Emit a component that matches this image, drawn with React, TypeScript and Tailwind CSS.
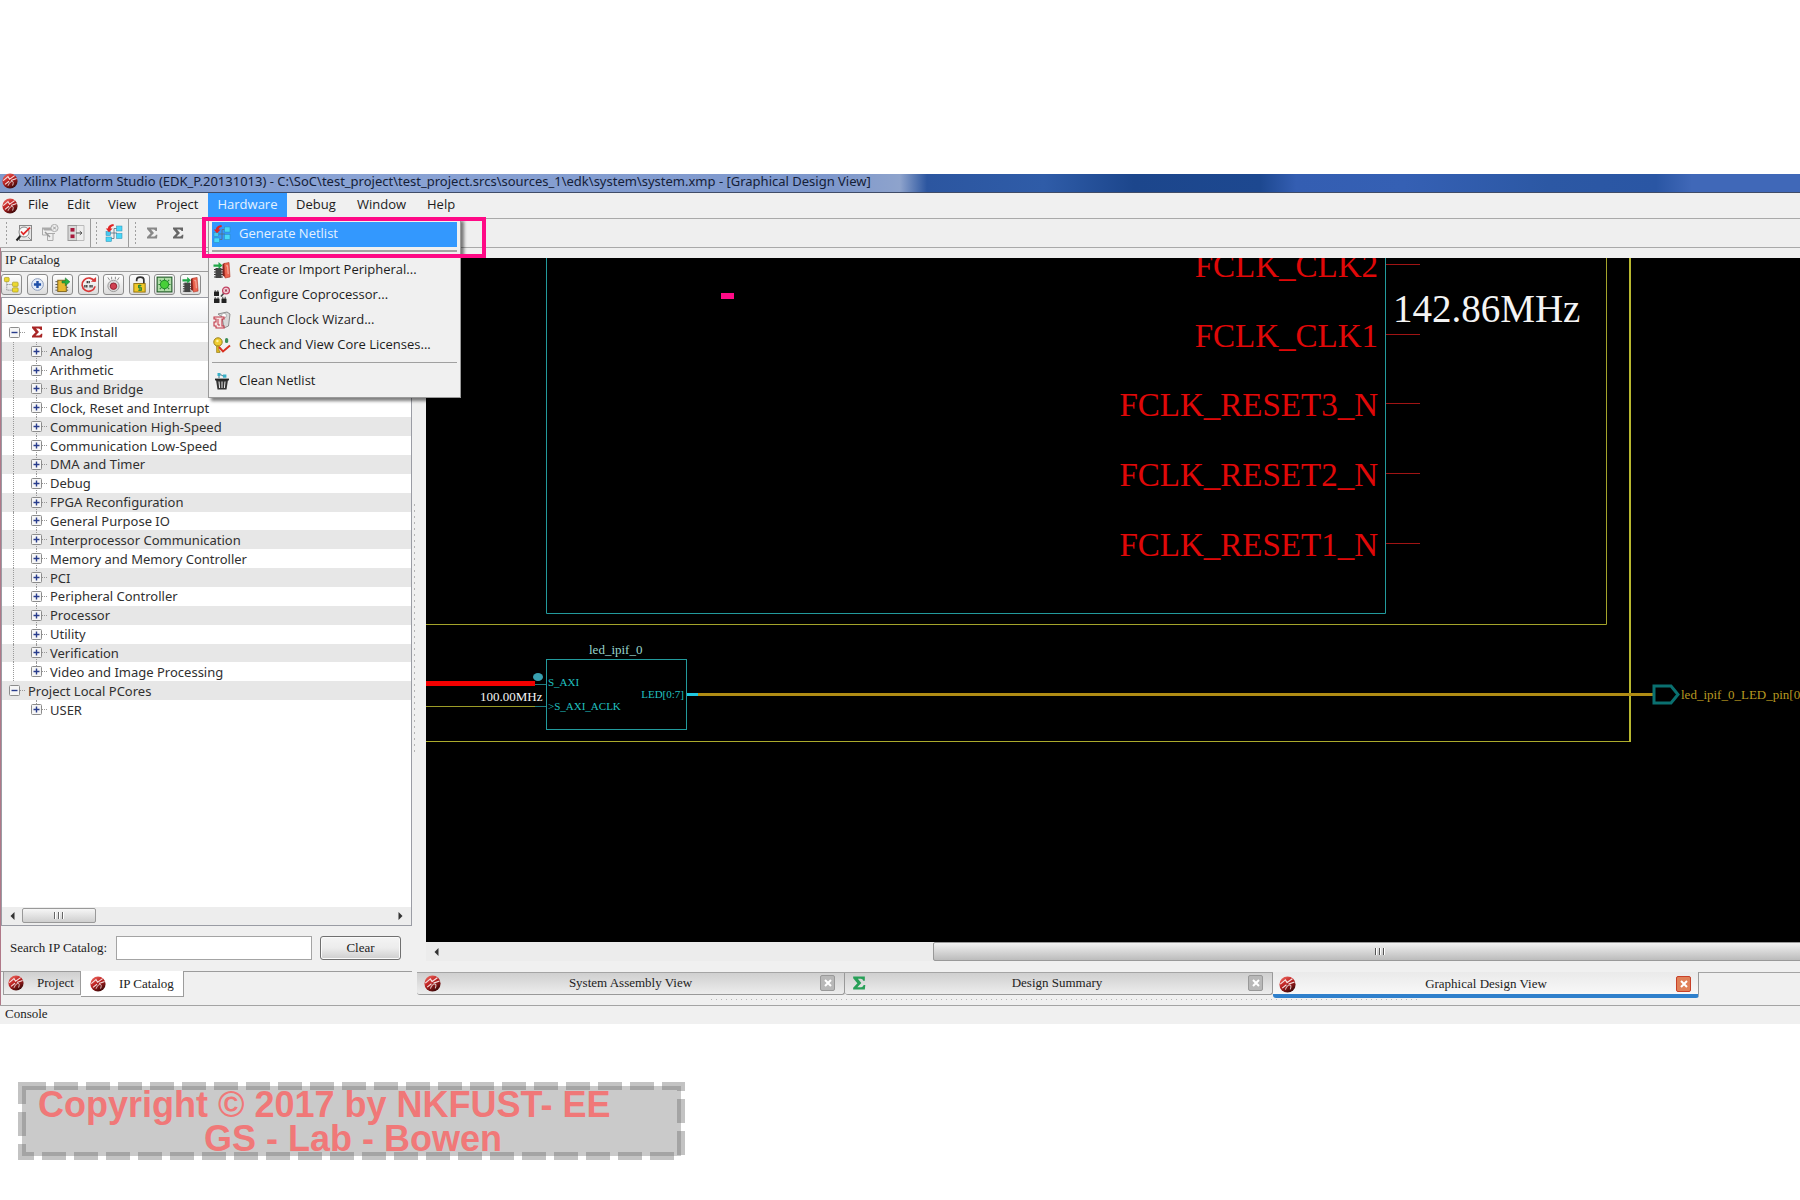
import React from "react";

const sans = "font-['Open_Sans','Noto_Sans',sans-serif]";
const wideSans = "font-['Noto_Sans','Open_Sans',sans-serif]";
const serif = "font-['Liberation_Serif',serif]";

function Logo({ className = "size-4" }: { className?: string }) {
  return (
    <svg viewBox="0 0 16 16" className={`${className} shrink-0`} aria-hidden="true">
      <defs>
        <linearGradient id="ball" x1="0" y1="0" x2="0.6" y2="1">
          <stop offset="0" stopColor="#f4746a" />
          <stop offset="0.5" stopColor="#c02424" />
          <stop offset="1" stopColor="#400808" />
        </linearGradient>
      </defs>
      <circle cx="8" cy="8" r="7.6" fill="url(#ball)" />
      <path d="M1.2 7.6 6 3.6 7.6 6.2 12.6 2.6M3 11.4 7 8.2M9 7.6 14.6 5.6" fill="none" stroke="#f6e0e0" strokeWidth="1.1" />
      <path d="M6 12.8Q7.4 8.6 9.8 8.4T10.6 12.6" fill="none" stroke="#dcc4c4" strokeWidth="1" />
    </svg>
  );
}

function Sigma({ color, className = "size-3" }: { color: string; className?: string }) {
  return (
    <svg viewBox="0 0 12 12" className={`${className} shrink-0`} aria-hidden="true">
      <path d="M1 0.5H11V4H9.6Q9.2 2.4 7.6 2.4H5L8 6 4.6 9.6H8Q9.6 9.6 10 7.8H11.4L11 11.5H1V10L4.6 6.2 1 2Z" fill={color} />
    </svg>
  );
}

type IconProps = { children: React.ReactNode; className?: string };
function Icon({ children, className = "size-[18px]" }: IconProps) {
  return (
    <svg viewBox="0 0 18 18" className={`${className} shrink-0`} aria-hidden="true">
      {children}
    </svg>
  );
}

const NetlistGlyph = () => (
  <>
    <path d="M9 4.5V14.5M5 9H12M9 4.5H12M6 14.5H9" stroke="#5c6c7c" strokeWidth=".8" fill="none" />
    <rect x="1" y="7.5" width="4.5" height="4" fill="#48c8f0" stroke="#2a8ab0" strokeWidth=".5" />
    <rect x="1" y="13" width="5.5" height="4.5" fill="#48d8f8" stroke="#2a8ab0" strokeWidth=".5" />
    <rect x="11.5" y="2" width="5.5" height="5" fill="#48d8f8" stroke="#2a8ab0" strokeWidth=".5" />
    <rect x="11.5" y="9.5" width="5.5" height="5" fill="#48d8f8" stroke="#2a8ab0" strokeWidth=".5" />
    <path d="M8.5 0 8.8 2Q6 2 5.6 4.6H7.6L4 8.2 0.8 4.6H2.8Q3.2 0.6 8.5 0Z" fill="#e02424" />
  </>
);

const PeripheralGlyph = () => (
  <>
    <path d="M1 8.5H10M1 11H10M1 13.5H10M1 16H10" stroke="#333" />
    <rect x="2.5" y="7" width="6" height="10" fill="#444" />
    <path d="M0.5 3.5H5.5V1L9.5 4.5 5.5 8V5.8H0.5Z" fill="#20a848" />
    <path d="M9.5 3 12 2V16L9.5 14.5Z" fill="#7c2420" />
    <path d="M11 2.5 16 1.5 17 16 12 17Z" fill="#ec6450" stroke="#b03020" strokeWidth=".6" />
    <path d="M13 5 14.6 4.6 15.2 13" stroke="#f8b8a8" fill="none" />
  </>
);

const CoprocessorGlyph = () => (
  <>
    <rect x="1" y="5.5" width="5" height="4.5" rx=".6" fill="#222" />
    <rect x="1" y="12.5" width="5.5" height="4.5" rx=".6" fill="#222" />
    <rect x="8.5" y="12.5" width="5" height="4.5" rx=".6" fill="#222" />
    <path d="M2.2 4.2V6M4.8 4.2V6M2.2 11.2V13M5 11.2V13M9.8 10.8V13M12.2 10.8V13" stroke="#444" />
    <path d="M8 10.5 11 7" stroke="#444" strokeWidth="1.6" />
    <circle cx="13" cy="4.5" r="3.4" fill="#f4d0d8" stroke="#c04060" strokeWidth="1.3" />
    <path d="M11.8 3.4 14.2 5.6M14.2 3.4 11.8 5.6" stroke="#902840" />
  </>
);

const ClockGlyph = () => (
  <>
    <path d="M5 3 14 1 17 3 15.5 15 11 17 9 6Z" fill="#d8d8d8" stroke="#777" strokeWidth=".8" />
    <circle cx="11" cy="4.6" r="2.4" fill="#fff" stroke="#999" strokeWidth=".7" />
    <path d="M1 6H11V8H9V15H11V17H3V15H1V11H3V8H1Z" fill="#f6e4e4" stroke="#c03848" strokeWidth="1.1" />
    <path d="M5 8V14H7" stroke="#c03848" fill="none" />
  </>
);

const LicenseGlyph = () => (
  <>
    <circle cx="5" cy="6" r="4.2" fill="#f0cc30" stroke="#98801c" />
    <circle cx="4.4" cy="5" r="1.2" fill="#fff4a0" />
    <path d="M3.6 10V16.5H7V15H6V10Z" fill="#e0b820" stroke="#98801c" strokeWidth=".7" />
    <path d="M6 11 10 15.5 17 9.5" fill="none" stroke="#d83020" strokeWidth="1.9" />
    <rect x="12" y="2" width="3.2" height="5" rx="1.5" fill="#3c8c58" />
  </>
);

const TrashGlyph = () => (
  <>
    <path d="M3 8H15L13.5 17.5H4.5Z" fill="#333" />
    <path d="M6 9.5 6.6 16M9 9.5V16M12 9.5 11.4 16" stroke="#eee" />
    <path d="M2 7.5H16" stroke="#222" strokeWidth="1.8" />
    <rect x="4.5" y="1" width="3" height="3" fill="#38b0c8" />
    <rect x="10" y="2.5" width="3.4" height="3.2" fill="#38b0c8" />
    <path d="M7.5 2.5 10 4M6 4V6" stroke="#38788c" />
  </>
);

const CheckDocGlyph = () => (
  <>
    <rect x="4.5" y="1.5" width="12" height="15" fill="#e6e6e6" stroke="#888" />
    <path d="M13 13 16 16" stroke="#999" />
    <circle cx="9" cy="8" r="5" fill="#fafafa" stroke="#888" />
    <path d="M5.4 12 1.5 16.5" stroke="#222" strokeWidth="2" />
    <path d="M6 7.5 8.4 10.2 15 3.6" fill="none" stroke="#e02828" strokeWidth="1.7" />
  </>
);

const WindowXGlyph = () => (
  <>
    <rect x="1" y="3.5" width="11" height="3" fill="#aaa" />
    <path d="M1.5 4V11H6M12 9V16.5H6.5V9.5H14" fill="#eee" stroke="#aaa" />
    <path d="M4 8 9 13" stroke="#999" strokeWidth="1.5" />
    <circle cx="13.5" cy="4" r="3.6" fill="#eee" stroke="#aaa" />
    <path d="M12 2.5 15 5.5M15 2.5 12 5.5" stroke="#999" />
  </>
);

const PortsGlyph = () => (
  <>
    <rect x="1" y="1.5" width="9" height="15" fill="#d8d8d8" stroke="#999" />
    <path d="M10 1.5H17V16.5H10" fill="#eee" stroke="#bbb" />
    <rect x="3.5" y="4" width="4" height="3.6" fill="#a8183c" />
    <rect x="3.5" y="10.5" width="4" height="3.6" fill="#a8183c" />
    <path d="M9 9H15M12.8 7.2 15 9 12.8 10.8" fill="none" stroke="#555" />
  </>
);

const catalogTools: { label: string; glyph: React.ReactNode }[] = [
  {
    label: "Tree view",
    glyph: (
      <>
        <path d="M4 4V15H10M4 9H10" fill="none" stroke="#777" strokeDasharray="1 1" />
        <rect x="1.5" y="1.5" width="5" height="4.5" rx="1" fill="#ecd830" stroke="#a89818" strokeWidth=".7" />
        <rect x="10" y="6.5" width="6" height="4.5" rx="1" fill="#ecd830" stroke="#a89818" strokeWidth=".7" />
        <rect x="10" y="12.5" width="6" height="4.5" rx="1" fill="#ecd830" stroke="#a89818" strokeWidth=".7" />
      </>
    ),
  },
  {
    label: "Expand all",
    glyph: (
      <>
        <circle cx="9" cy="9" r="6.2" fill="#e4ecf8" stroke="#8898b8" />
        <path d="M9 5.2V12.8M5.2 9H12.8" stroke="#2050a8" strokeWidth="2.6" />
      </>
    ),
  },
  {
    label: "Add core",
    glyph: (
      <>
        <path d="M1.5 6H6M1.5 9H6M1.5 12H6M1.5 15H6M13 12H15M13 15H15" stroke="#555" />
        <rect x="4" y="4.5" width="9" height="12" fill="#e8b830" stroke="#80641c" />
        <path d="M8.5 5.2H12V2L16.8 6.2 12 10.4V7.4H8.5Z" fill="#28b040" stroke="#187028" strokeWidth=".6" />
      </>
    ),
  },
  {
    label: "Refresh catalog",
    glyph: (
      <>
        <path d="M15.5 6A7 7 0 1 0 16 11" fill="none" stroke="#d83838" strokeWidth="1.8" />
        <path d="M11.5 6.2H17V1Z" fill="#d83838" />
        <path d="M7 6.5H11M4.5 10.8H8M10 10.8H13.5" stroke="#333" strokeWidth="2.6" strokeDasharray="1.4 .6" />
      </>
    ),
  },
  {
    label: "Locate core",
    glyph: (
      <>
        <path d="M3 1.5 5 4.5M7 0.8V3.6M11 0.8V3.6M15 1.5 13 4.5" stroke="#888" />
        <circle cx="9" cy="10.5" r="6" fill="#d8d8d8" stroke="#999" />
        <circle cx="9" cy="10.8" r="3.4" fill="#d04050" stroke="#902030" />
      </>
    ),
  },
  {
    label: "License",
    glyph: (
      <>
        <path d="M6 5.5V4A3.8 2.8 0 0 1 13.6 4V9" fill="none" stroke="#333" strokeWidth="1.8" />
        <rect x="3" y="8" width="12" height="9" fill="#f0c828" stroke="#907010" />
        <path d="M11 10H8V12.4H11V15H7.6M9.4 9V16" fill="none" stroke="#288838" strokeWidth="1.1" />
      </>
    ),
  },
  {
    label: "Show chip",
    glyph: (
      <>
        <rect x="1.2" y="1.2" width="15.6" height="15.6" fill="#b0dca8" stroke="#225c28" strokeWidth="1.2" />
        <path d="M4 4 14 14M14 4 4 14M9 2.6V15.4M2.6 9H15.4" stroke="#2c8c30" strokeWidth="1.2" />
        <circle cx="9" cy="9" r="4.4" fill="#48d038" stroke="#208828" />
      </>
    ),
  },
  { label: "Import peripheral", glyph: <PeripheralGlyph /> },
];

const menuEntries: { label: string; icon: React.ReactNode }[] = [
  { label: "Create or Import Peripheral...", icon: <PeripheralGlyph /> },
  { label: "Configure Coprocessor...", icon: <CoprocessorGlyph /> },
  { label: "Launch Clock Wizard...", icon: <ClockGlyph /> },
  { label: "Check and View Core Licenses...", icon: <LicenseGlyph /> },
];

function HardwareMenu() {
  return (
    <div role="menu" className="absolute left-0 top-full z-20 w-[253px] border border-[#9a9a9a] bg-[#f0f0f0] px-[3px] pb-1 pt-[3px] text-[13px] text-[#1c1c1c] shadow-[3px_3px_3px_rgba(0,0,0,0.5)]">
      <button role="menuitem" className="flex h-[25px] w-full items-center gap-2 bg-[#3398fe] pb-px pl-px text-left text-[#e4f1ff]">
        <Icon><NetlistGlyph /></Icon>
        Generate Netlist
      </button>
      <div className="mb-[5px] mt-[3px] border-t-2 border-[#a4a4a4]" />
      {menuEntries.map((m) => (
        <button key={m.label} role="menuitem" className="flex h-[25px] w-full items-center gap-2 whitespace-nowrap pl-px text-left">
          <Icon>{m.icon}</Icon>
          {m.label}
        </button>
      ))}
      <div className="my-[5px] border-t border-[#a0a0a0]" />
      <button role="menuitem" className="flex h-[25px] w-full items-center gap-2 pl-px text-left">
        <Icon><TrashGlyph /></Icon>
        Clean Netlist
      </button>
    </div>
  );
}

function MenuBar() {
  const item = "flex h-full items-center pb-[2px]";
  return (
    <nav className={`${sans} relative z-10 flex h-[26px] items-center border-b border-[#a9a9a9] bg-[#f0f0f0] pl-[2px] text-[13px] text-[#1c1c1c]`}>
      <Logo />
      <button className={`${item} w-[39px] pl-[10px]`}>File</button>
      <button className={`${item} w-[41px] pl-[10px]`}>Edit</button>
      <button className={`${item} w-12 pl-[10px]`}>View</button>
      <button className={`${item} w-[62px] pl-[10px]`}>Project</button>
      <div className="relative h-full">
        <button aria-expanded="true" className={`${item} w-[79px] justify-center bg-[#3398fe] text-[#e4f1ff]`}>Hardware</button>
        <HardwareMenu />
        <div className="pointer-events-none absolute -left-[6px] top-6 z-30 h-[41px] w-[284px] border-4 border-[#ff0a86]" />
      </div>
      <button className={`${item} w-[61px] pl-[9px]`}>Debug</button>
      <button className={`${item} w-[70px] pl-[9px]`}>Window</button>
      <button className={`${item} pl-[9px]`}>Help</button>
    </nav>
  );
}

function Grip() {
  return <div className="h-6 w-[3px] bg-[radial-gradient(circle,#a0a0a0_1px,transparent_1px)] bg-[length:3px_4px]" />;
}

function Toolbar() {
  return (
    <div className="flex h-[29px] items-center border-b border-[#a9a9a9] bg-[#efefef] pl-[5px]">
      <Grip />
      <div className="flex h-full items-center gap-2 border-r border-[#9c9c9c] pl-[7px] pr-[5px]">
        <button aria-label="Check design"><Icon><CheckDocGlyph /></Icon></button>
        <button aria-label="Close window"><Icon><WindowXGlyph /></Icon></button>
        <button aria-label="Ports"><Icon><PortsGlyph /></Icon></button>
      </div>
      <div className="flex h-full items-center gap-[7px] border-r border-[#9c9c9c] pl-1 pr-[5px]">
        <Grip />
        <button aria-label="Generate netlist"><Icon><NetlistGlyph /></Icon></button>
      </div>
      <div className="flex h-full items-center pl-[5px]">
        <Grip />
        <button aria-label="Summary" className="ml-[9px]"><Sigma color="#888" /></button>
        <button aria-label="Report" className="ml-[14px]"><Sigma color="#666" /></button>
      </div>
    </div>
  );
}

const groups = [
  "Analog", "Arithmetic", "Bus and Bridge", "Clock, Reset and Interrupt", "Communication High-Speed",
  "Communication Low-Speed", "DMA and Timer", "Debug", "FPGA Reconfiguration", "General Purpose IO",
  "Interprocessor Communication", "Memory and Memory Controller", "PCI", "Peripheral Controller",
  "Processor", "Utility", "Verification", "Video and Image Processing",
];

function Toggle({ open }: { open?: boolean }) {
  return (
    <button aria-label={open ? "Collapse" : "Expand"} className="relative z-10 size-[11px] shrink-0">
      <svg viewBox="0 0 11 11" className="size-[11px]">
        <rect x=".5" y=".5" width="10" height="10" rx="1" fill="#f6f6f6" stroke="#8c8c8c" />
        <path d={open ? "M2.5 5.5H8.5" : "M2.5 5.5H8.5M5.5 2.5V8.5"} stroke="#283c8c" strokeWidth="1.4" />
      </svg>
    </button>
  );
}

function Leaf({ label, last }: { label: string; last?: boolean }) {
  return (
    <div className="relative flex items-center pl-[29px] even:bg-[#e7e7e7]">
      {label !== "USER" && <span className="absolute inset-y-0 left-[11px] border-l border-dotted border-[#999]" />}
      <span className={`absolute left-[34px] top-0 border-l border-dotted border-[#999] ${last ? "bottom-1/2" : "bottom-0"}`} />
      <Toggle />
      <span className="w-[5px] border-t border-dotted border-[#999]" />
      <span className="pl-[3px]">{label}</span>
    </div>
  );
}

function Tree() {
  return (
    <div className={`${wideSans} grid h-[396px] auto-rows-fr text-[13px] leading-[18px] text-[#303030]`}>
      <div className="flex items-center pl-[7px]">
        <Toggle open />
        <span className="w-[5px] border-t border-dotted border-[#999]" />
        <span className="pl-[6px]"><Sigma color="#a82424" /></span>
        <span className="pl-[9px]">EDK Install</span>
      </div>
      {groups.map((g) => (
        <Leaf key={g} label={g} last={g === "Video and Image Processing"} />
      ))}
      <div className="flex items-center pl-[7px] even:bg-[#e7e7e7]">
        <Toggle open />
        <span className="w-[5px] border-t border-dotted border-[#999]" />
        <span className="pl-[3px]">Project Local PCores</span>
      </div>
      <Leaf label="USER" last />
    </div>
  );
}

function Arrow({ right }: { right?: boolean }) {
  return (
    <svg viewBox="0 0 5 8" className="h-2 w-[5px]" aria-hidden="true">
      <path d={right ? "M0.5 0 4.5 4 0.5 8Z" : "M4.5 0 0.5 4 4.5 8Z"} fill="#333" />
    </svg>
  );
}

function Sidebar() {
  return (
    <aside className="flex w-[411px] shrink-0 flex-col pt-[3px]">
      <h2 className={`${serif} flex h-[21px] items-center border border-r-0 border-[#9c9c9c] pb-[3px] pl-[3px] text-[13px] text-[#222]`}>IP Catalog</h2>
      <div className="flex h-[25px] w-[200px] items-center justify-between">
        {catalogTools.map((t) => (
          <button key={t.label} aria-label={t.label} className="flex size-[21px] items-center justify-center rounded-[3px] border border-[#8c8c8c] bg-gradient-to-b from-white to-[#dcdcdc]">
            <Icon className="size-[17px]">{t.glyph}</Icon>
          </button>
        ))}
      </div>
      <div className="flex h-[629px] flex-col border border-[#9a9ca4] bg-white">
        <div className={`${sans} flex h-[25px] items-center border-b border-[#d4d4d4] bg-gradient-to-b from-white to-[#eff0f2] pl-[5px] text-[13px] text-[#303030]`}>Description</div>
        <Tree />
        <div className="mt-auto flex h-[18px] items-center bg-[#ededed] px-2 pb-px">
          <Arrow />
          <div className="ml-[7px] flex h-[15px] w-[74px] items-center justify-center gap-[2px] rounded-[2px] border border-[#999] bg-gradient-to-b from-[#f6f6f6] to-[#cfcfcf]">
            {[0, 1, 2].map((i) => <span key={i} className="h-[7px] w-[2px] border-r border-white bg-[#666]" />)}
          </div>
          <span className="ml-auto"><Arrow right /></span>
        </div>
      </div>
      <div className={`${serif} flex h-[45px] items-center pb-px pl-[9px] text-[13px] text-[#222]`}>
        <label htmlFor="search" className="w-[106px]">Search IP Catalog:</label>
        <input id="search" className="h-6 w-[196px] border border-[#a4a4a4] bg-white px-1 outline-none" />
        <button className="ml-2 h-6 w-[81px] rounded-[3px] border border-[#707070] bg-gradient-to-b from-[#f4f4f4] via-[#ececec] to-[#cecece] pb-px shadow-[inset_0_0_0_1px_#fafafa]">Clear</button>
      </div>
      <div role="tablist" className={`${serif} flex h-[34px] items-start border-t border-[#9c9c9c] pl-[2px] text-[13px] text-[#222]`}>
        <button role="tab" aria-selected="false" className="flex h-[23px] w-[78px] items-center gap-[13px] border border-t-0 border-[#9c9c9c] bg-gradient-to-b from-[#d0d0d0] to-[#f0f0f0] pl-1">
          <Logo />Project
        </button>
        <button role="tab" aria-selected="true" className="-mt-px flex h-[26px] w-[103px] items-center gap-[13px] border border-l-0 border-t-0 border-[#9c9c9c] bg-white pl-[9px]">
          <Logo />IP Catalog
        </button>
      </div>
    </aside>
  );
}

const pins = [
  { name: "FCLK_CLK2", y: 6 },
  { name: "FCLK_CLK1", y: 76 },
  { name: "FCLK_RESET3_N", y: 145 },
  { name: "FCLK_RESET2_N", y: 215 },
  { name: "FCLK_RESET1_N", y: 285 },
];

function Schematic() {
  return (
    <svg className="block h-[684px] w-full bg-black" fontFamily="Liberation Serif, serif">
      <path d="M120.5 0V355.5H959.5V0" fill="none" stroke="#229a9c" />
      <path d="M0 366.5H1180.5V0" fill="none" stroke="#a4a42a" />
      <path d="M0 483.5H1204" fill="none" stroke="#acac2c" />
      <path d="M1204 0V484" fill="none" stroke="#b8b830" strokeWidth="2" />
      {pins.map((p) => (
        <g key={p.name}>
          <text x="952" y={p.y + 13} textAnchor="end" fontSize="33" fill="#e00808">{p.name}</text>
          <path d={`M960 ${p.y + 0.5}H994`} stroke="#a01414" />
        </g>
      ))}
      <text x="967" y="64" fontSize="39" fill="#f4f4f4">142.86MHz</text>
      <rect x="295" y="35" width="13" height="6" fill="#ff0a86" />
      <path d="M0 425.5H109" stroke="#f40000" strokeWidth="5" />
      <path d="M109 426.5H120M109 448.5H120" stroke="#207c80" />
      <path d="M0 448.5H109" stroke="#9c9c28" />
      <ellipse cx="112" cy="419" rx="5" ry="4" fill="#38a0b0" />
      <rect x="120.5" y="401.5" width="140" height="70" fill="none" stroke="#229a9c" />
      <text x="163" y="396" fontSize="13" fill="#98d4cc">led_ipif_0</text>
      <text x="54" y="443" fontSize="13" fill="#f4f4f4">100.00MHz</text>
      <g fill="#20c0c0" fontSize="11">
        <text x="122" y="428">S_AXI</text>
        <text x="122" y="452">&gt;S_AXI_ACLK</text>
        <text x="258" y="440" textAnchor="end">LED[0:7]</text>
      </g>
      <path d="M272 436.5H1227" stroke="#b08c14" strokeWidth="3" />
      <path d="M261 436.5H272" stroke="#20c8e0" strokeWidth="3" />
      <path d="M1228 428H1245L1252 436.5 1245 445H1228Z" fill="black" stroke="#0a7070" strokeWidth="3" />
      <text x="1255" y="441" fontSize="13" fill="#b89820">led_ipif_0_LED_pin[0:7]</text>
    </svg>
  );
}

const views = [
  { title: "System Assembly View", icon: <Logo className="size-[17px]" />, active: false },
  { title: "Design Summary", icon: <Sigma color="#28a058" className="size-[14px]" />, active: false },
  { title: "Graphical Design View", icon: <Logo className="size-[17px]" />, active: true },
];

function ViewTabs() {
  return (
    <div role="tablist" className={`${serif} -ml-[9px] flex h-[25px] items-start border-t border-[#a4a4a4] text-[13px] text-[#222]`}>
      {views.map((v) => (
        <div
          key={v.title}
          className={
            v.active
              ? "-mt-px flex h-[26px] w-[426px] items-center rounded-b-[3px] border-b-4 border-r border-b-[#2f80cc] border-r-[#999] bg-gradient-to-b from-[#eaeaea] to-[#f8f8f8] pl-[6px] pr-[7px] pt-[2px]"
              : "flex h-[22px] w-[428px] items-center rounded-b-[3px] border-b border-r border-[#999] bg-gradient-to-b from-[#cfcfcf] to-[#ededed] pb-px pl-[7px] pr-[9px]"
          }
        >
          {v.icon}
          <button role="tab" aria-selected={v.active} className="h-full flex-1">{v.title}</button>
          <button
            aria-label={`Close ${v.title}`}
            className={
              v.active
                ? "flex h-4 w-[15px] items-center justify-center rounded-[2px] border border-[#c84028] bg-[#e08058]"
                : "flex h-4 w-[15px] items-center justify-center rounded-[2px] border border-[#999] bg-[#b8b8b8]"
            }
          >
            <svg viewBox="0 0 8 8" className="size-2"><path d="M1 1 7 7M7 1 1 7" stroke="white" strokeWidth="2" /></svg>
          </button>
        </div>
      ))}
    </div>
  );
}

function Workspace() {
  return (
    <main className="min-w-0 flex-1 pt-[10px]">
      <Schematic />
      <div className="flex h-[19px] items-center overflow-hidden bg-[#ececec] pl-2">
        <Arrow />
        <div className="-mr-[27px] ml-auto flex h-[19px] w-[894px] shrink-0 items-center justify-center gap-[2px] rounded-l-[2px] border border-[#999] bg-gradient-to-b from-[#f2f2f2] to-[#bcbcbc]">
          {[0, 1, 2].map((i) => <span key={i} className="h-[7px] w-[2px] border-r border-white bg-[#555]" />)}
        </div>
      </div>
      <div className="h-[11px]" />
      <ViewTabs />
      <div className="ml-[283px] mt-px h-[3px] w-[708px] bg-[radial-gradient(circle,#b4b4b4_1px,transparent_1px)] bg-[length:5px_3px]" />
    </main>
  );
}

function Copyright() {
  return (
    <footer className="relative ml-[22px] mt-[62px] h-[70px] w-[659px] bg-[#cacaca] pt-[2px] font-['Liberation_Sans',Arial,sans-serif] text-[36px] font-bold leading-[34px] text-[#f07878]">
      <p className="pl-4">Copyright © 2017 by NKFUST- EE</p>
      <p className="pl-[182px]">GS - Lab - Bowen</p>
      <svg className="pointer-events-none absolute inset-0 size-full overflow-visible" aria-hidden="true">
        <rect width="100%" height="100%" fill="none" stroke="#707070" strokeOpacity=".42" strokeWidth="8" strokeDasharray="24 8" />
      </svg>
    </footer>
  );
}

export default function App() {
  return (
    <div className="min-h-screen overflow-hidden bg-white pt-[174px]">
      <div className="bg-[#f0f0f0]">
        <header className={`${wideSans} flex h-[19px] items-center gap-[6px] border-b border-[#404c68] bg-[linear-gradient(90deg,#8099cc_0%,#8aa3d4_20%,#7d97cc_46%,#8ea3cc_50%,#2c56a0_51.5%,#2f5ca8_58%,#1c468c_63%,#1d4890_70%,#345eb2_72%,#3560b4_78%,#2c58a4_86%,#2a56a4_92%,#4068b8_94%)] pb-[5px] pl-[2px] text-[13px] leading-4 text-[#142038]`}>
          <Logo />
          <h1 className="whitespace-nowrap">
            Xilinx Platform Studio (EDK_P.20131013) - C:\SoC\test_project\test_project.srcs\sources_1\edk\system\system.xmp - [Graphical Design View]
          </h1>
        </header>
        <MenuBar />
        <Toolbar />
        <div className="flex border-l border-[#b07888]">
          <Sidebar />
          <div className="flex w-[14px] shrink-0 items-center pl-px">
            <div className="h-[250px] w-[3px] bg-[radial-gradient(circle,#b4b4b4_1px,transparent_1px)] bg-[length:3px_6px]" />
          </div>
          <Workspace />
        </div>
        <div className={`${serif} flex h-[19px] items-center border-t border-[#a4a4a4] pb-[2px] pl-[5px] text-[13px] text-[#222]`}>Console</div>
      </div>
      <Copyright />
    </div>
  );
}
